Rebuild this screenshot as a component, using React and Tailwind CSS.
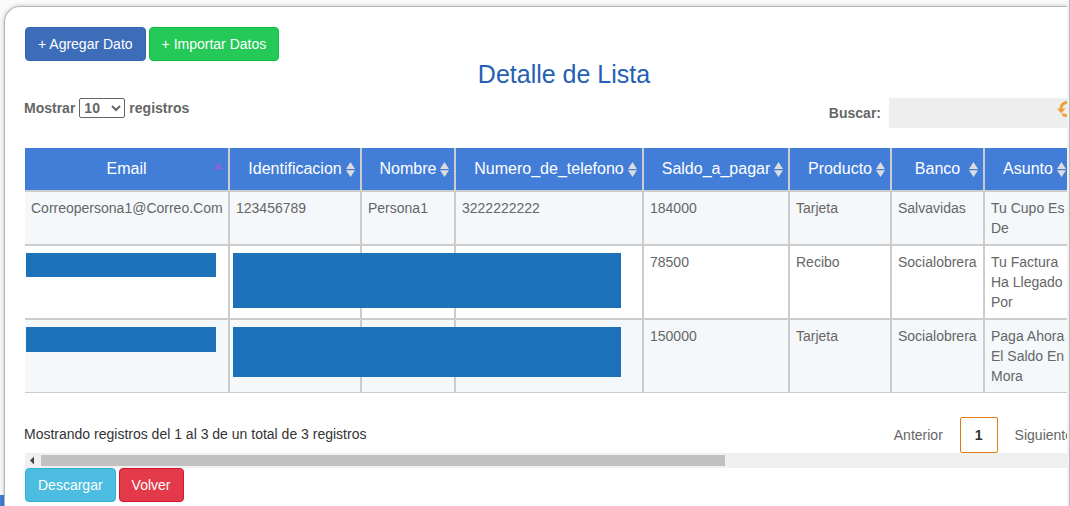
import React, { useState } from 'react';

const columns = [
    { key: 'email', label: 'Email', width: 'w-[205px]' },
    { key: 'identificacion', label: 'Identificacion', width: 'w-[132px]' },
    { key: 'nombre', label: 'Nombre', width: 'w-[94px]' },
    { key: 'telefono', label: 'Numero_de_telefono', width: 'w-[188px]' },
    { key: 'saldo', label: 'Saldo_a_pagar', width: 'w-[146px]' },
    { key: 'producto', label: 'Producto', width: 'w-[102px]' },
    { key: 'banco', label: 'Banco', width: 'w-[93px]' },
    { key: 'asunto', label: 'Asunto', width: '' },
];

const rows = [
    {
        email: 'Correopersona1@Correo.Com',
        identificacion: '123456789',
        nombre: 'Persona1',
        telefono: '3222222222',
        saldo: '184000',
        producto: 'Tarjeta',
        banco: 'Salvavidas',
        asunto: 'Tu Cupo Es De',
    },
    {
        saldo: '78500',
        producto: 'Recibo',
        banco: 'Socialobrera',
        asunto: 'Tu Factura Ha Llegado Por',
        masks: { email: 'left-px w-[190px] h-6', identificacion: 'left-[3px] w-[388px] h-[55px]' },
    },
    {
        saldo: '150000',
        producto: 'Tarjeta',
        banco: 'Socialobrera',
        asunto: 'Paga Ahora El Saldo En Mora',
        masks: { email: 'left-px w-[190px] h-[25px]', identificacion: 'left-[3px] w-[388px] h-[50px]' },
    },
];

const Button = ({ className, children }) => (
    <button type="button" className={`h-[34px] px-3 border rounded text-sm text-white ${className}`}>
        {children}
    </button>
);

const SortIcon = ({ active }) => (
    <svg viewBox="0 0 9 15" className="absolute right-[5px] top-3.5 w-[9px] h-[15px]">
        {active ? (
            <path d="M0.5 7.5 4.5 0.5l4 7z" fill="#8a66d8" />
        ) : (
            <path d="M0 7 4.5 0 9 7zM0 8.2h9L4.5 15z" fill="#dcdcdc" />
        )}
    </svg>
);

const RefreshIcon = () => (
    <svg viewBox="0 0 20 16" className="w-5 h-4" fill="none" stroke="#eea236" strokeWidth="3">
        <path d="M4 8a6.3 6.3 0 0 1 10.5-5" />
        <path d="M16 8a6.3 6.3 0 0 1-10.5 5" />
        <path d="M0 7.5h8.5L4.2 12.5z" fill="#eea236" stroke="none" />
        <path d="M11.5 8.5H20L15.8 3.5z" fill="#eea236" stroke="none" />
    </svg>
);

const App = () => {
    const [pageSize, setPageSize] = useState('10');
    const [search, setSearch] = useState('');

    return (
        <div className="relative flex min-h-screen overflow-hidden bg-[#fafafa] font-['Liberation_Sans',Arial,sans-serif] text-sm text-[#333]">
            {/* Footer band behind the card */}
            <div className="absolute bottom-0 left-0 w-full h-[11px] bg-[#427dd8]" />

            <main className="relative flex-1 min-w-0 mt-1.5 ml-1 pt-5 pb-1 overflow-hidden bg-white border-t border-l border-[#b8b8b8] rounded-tl-2xl shadow-[0_0_4px_rgba(0,0,0,0.25)]">
                <div className="flex gap-[3px] pl-5">
                    <Button className="bg-[#3d6db9] border-[#3565b0]">+ Agregar Dato</Button>
                    <Button className="bg-[#24c957] border-[#12bd45]">+ Importar Datos</Button>
                </div>

                <h1 className="h-[37px] pl-14 text-center text-[25px] leading-[27px] text-[#2460b5]">Detalle de Lista</h1>

                <div className="flex items-start justify-between pl-[19px] font-bold text-[#666]">
                    <label className="flex items-center gap-1 leading-5">
                        Mostrar
                        <select
                            value={pageSize}
                            onChange={(e) => setPageSize(e.target.value)}
                            className="w-[46px] h-5 bg-white border border-[#666] rounded-xs"
                        >
                            <option>10</option>
                            <option>25</option>
                            <option>50</option>
                            <option>100</option>
                        </select>
                        registros
                    </label>
                    <label className="relative flex items-center gap-2 overflow-hidden">
                        Buscar:
                        <input
                            type="text"
                            value={search}
                            onChange={(e) => setSearch(e.target.value)}
                            className="w-[178px] h-[30px] px-2 bg-[#eee] font-normal outline-none"
                        />
                        <span className="absolute top-[3px] -right-2.5">
                            <RefreshIcon />
                        </span>
                    </label>
                </div>

                <div className="mt-5 pl-5 -mr-1">
                    <table className="w-full table-fixed border-separate border-spacing-0">
                        <thead>
                            <tr>
                                {columns.map((col, i) => (
                                    <th
                                        key={col.key}
                                        className={`relative p-0 bg-[#427dd8] border-b-2 border-[#ccc] font-normal last:border-r-0 border-r-2 ${col.width}`}
                                    >
                                        <button type="button" className="w-full h-[42px] text-base text-white">
                                            {col.label}
                                        </button>
                                        <SortIcon active={i === 0} />
                                    </th>
                                ))}
                            </tr>
                        </thead>
                        <tbody>
                            {rows.map((row) => (
                                <tr key={row.saldo} className="group odd:bg-[#f4f8fb]">
                                    {columns.map((col) => (
                                        <td
                                            key={col.key}
                                            className="relative py-1.5 pl-1.5 align-top leading-5 text-[#666] border-[#ccc] border-r-2 border-b-2 last:border-r-0 group-last:border-b"
                                        >
                                            {row.masks?.[col.key] ? (
                                                <div className={`absolute z-10 top-[7px] bg-[#1d71b8] ${row.masks[col.key]}`} />
                                            ) : (
                                                <p className={col.key === 'asunto' ? 'max-w-[76px]' : ''}>{row[col.key]}</p>
                                            )}
                                        </td>
                                    ))}
                                </tr>
                            ))}
                        </tbody>
                    </table>
                </div>

                <div className="flex justify-between mt-6 pl-[19px]">
                    <p className="py-[7px] leading-5">Mostrando registros del 1 al 3 de un total de 3 registros</p>
                    <nav className="flex gap-0.5 -mr-[21px] text-[#666]">
                        <button type="button" className="h-9 px-[15px]">Anterior</button>
                        <button type="button" className="h-9 px-3.5 border border-[#e07b10] rounded-xs font-bold text-[#333]">1</button>
                        <button type="button" className="h-9 px-[15px]">Siguiente</button>
                    </nav>
                </div>

                {/* Horizontal scrollbar */}
                <div className="flex items-center h-[15px] ml-5 bg-[#f0f0f0]">
                    <svg viewBox="0 0 16 15" className="shrink-0 w-4 h-[15px]">
                        <path d="M5 7.5 9 3.5v8z" fill="#444" />
                    </svg>
                    <div className="flex-1">
                        <div className="w-2/3 h-[11px] bg-[#c1c1c1]" />
                    </div>
                </div>

                <div className="flex gap-[3px] pl-5">
                    <Button className="bg-[#4cbde0] border-[#2fb2da]">Descargar</Button>
                    <Button className="bg-[#e4394a] border-[#d91230]">Volver</Button>
                </div>
            </main>

            <div className="relative w-[3px] bg-[#f0f0f0] border-r border-[#bbb]" />
        </div>
    );
};

export default App;
